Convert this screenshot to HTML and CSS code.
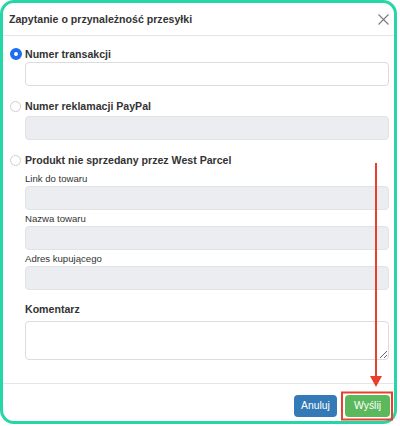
FILE: index.html
```html
<!DOCTYPE html>
<html lang="pl">
<head>
<meta charset="utf-8">
<title>Zapytanie o przynależność przesyłki</title>
<link rel="stylesheet" href="styles.css">
</head>
<body>
<div class="stage">
  <div class="modal">
    <div class="modal-header">
      <h4 class="modal-title">Zapytanie o przynależność przesyłki</h4>
      <button class="close" type="button" aria-label="Zamknij">
        <svg width="11" height="11" viewBox="0 0 11 11"><path d="M0.5 0.5 L10.5 10.5 M10.5 0.5 L0.5 10.5" stroke="#7a7a7a" stroke-width="1.1" fill="none"/></svg>
      </button>
    </div>
    <div class="modal-body">
      <label class="option"><input type="radio" name="typ" class="radio" checked><span>Numer transakcji</span></label>
      <input class="field" type="text">

      <label class="option option-gap"><input type="radio" name="typ" class="radio"><span>Numer reklamacji PayPal</span></label>
      <input class="field field-disabled field-near" type="text" disabled>

      <label class="option option-gap"><input type="radio" name="typ" class="radio"><span>Produkt nie sprzedany przez West Parcel</span></label>
      <div class="sublabel sublabel-first">Link do towaru</div>
      <input class="field field-disabled" type="text" disabled>
      <div class="sublabel">Nazwa towaru</div>
      <input class="field field-disabled" type="text" disabled>
      <div class="sublabel">Adres kupującego</div>
      <input class="field field-disabled" type="text" disabled>

      <div class="comment-label">Komentarz</div>
      <textarea class="field comment"></textarea>
    </div>
    <div class="modal-footer">
      <button class="btn btn-primary" type="button">Anuluj</button>
      <button class="btn btn-success" type="button">Wyślij</button>
    </div>
  </div>
  <svg class="annotation" width="400" height="426" viewBox="0 0 400 426">
    <line x1="376" y1="163" x2="376" y2="377" stroke="#e8402c" stroke-width="2"/>
    <polygon points="370,376 382,376 376,387" fill="#e8402c"/>
    <rect x="342" y="392.5" width="50" height="27" fill="none" stroke="#e8402c" stroke-width="2"/>
  </svg>
</div>
</body>
</html>
```

FILE: styles.css
```css
* { box-sizing: border-box; }
html, body { margin: 0; padding: 0; background: #ffffff; }
body {
  font-family: "Liberation Sans", Arial, sans-serif;
  color: #333333;
  width: 400px;
  height: 426px;
  overflow: hidden;
}
.stage {
  position: relative;
  width: 400px;
  height: 426px;
}
.modal {
  width: 397px;
  height: 424px;
  border: 3px solid #27d6a6;
  border-radius: 14px;
  background: #ffffff;
  display: flex;
  flex-direction: column;
  overflow: hidden;
}
.modal-header {
  height: 33px;
  flex: none;
  border-bottom: 1px solid #e6e6e6;
  display: flex;
  align-items: center;
  justify-content: space-between;
  padding: 0 5px 0 6px;
}
.modal-title {
  margin: 0;
  font-size: 10.6px;
  font-weight: bold;
  color: #333;
  line-height: 14px;
}
.close {
  border: 0;
  background: none;
  padding: 0;
  width: 11px;
  height: 11px;
  display: flex;
}
.modal-body {
  flex: 1;
  padding: 10px 5px 0 6px;
  display: flex;
  flex-direction: column;
}
.option {
  display: flex;
  align-items: center;
  gap: 4px;
  height: 16px;
  font-size: 10.6px;
  font-weight: bold;
  line-height: 16px;
}
.option-gap { margin-top: 12px; }
.radio {
  appearance: none;
  -webkit-appearance: none;
  margin: 0 0 0 1px;
  width: 11px;
  height: 11px;
  border-radius: 50%;
  border: 1px solid #cfcfcf;
  background: #fff;
  flex: none;
}
.radio:checked {
  width: 12px;
  height: 12px;
  margin-left: 0.5px;
  margin-right: -0.5px;
  border: 4px solid #1e6ff0;
}
.field {
  display: block;
  margin: 0 0 0 16px;
  width: 364px;
  height: 24px;
  border: 1px solid #dcdcdc;
  border-radius: 4px;
  background: #ffffff;
  font-family: inherit;
  font-size: 10px;
  outline: none;
}
.field-disabled {
  background: #ebedf0;
  border-color: #e0e2e5;
}
.field-near { margin-top: 2px; }
.sublabel {
  margin: 2px 0 0 16px;
  font-size: 9.6px;
  line-height: 14px;
  color: #333;
}
.sublabel-first { margin-top: 4px; }
.comment-label {
  margin: 11px 0 0 16px;
  font-size: 10.6px;
  font-weight: bold;
  line-height: 16px;
}
.comment {
  margin-top: 4px;
  height: 39px;
  resize: vertical;
}
.modal-footer {
  height: 38px;
  flex: none;
  border-top: 1px solid #e6e6e6;
  display: flex;
  justify-content: flex-end;
  align-items: flex-start;
  gap: 8px;
  padding: 11px 4px 0 0;
}
.btn {
  height: 22px;
  border: 0;
  border-radius: 4px;
  color: #fff;
  font-family: inherit;
  font-size: 10.4px;
  padding: 0;
  line-height: 22px;
}
.btn-primary { background: #337ab7; width: 43px; }
.btn-success { background: #5cb85c; width: 45px; }
.annotation {
  position: absolute;
  left: 0;
  top: 0;
  pointer-events: none;
}
```
